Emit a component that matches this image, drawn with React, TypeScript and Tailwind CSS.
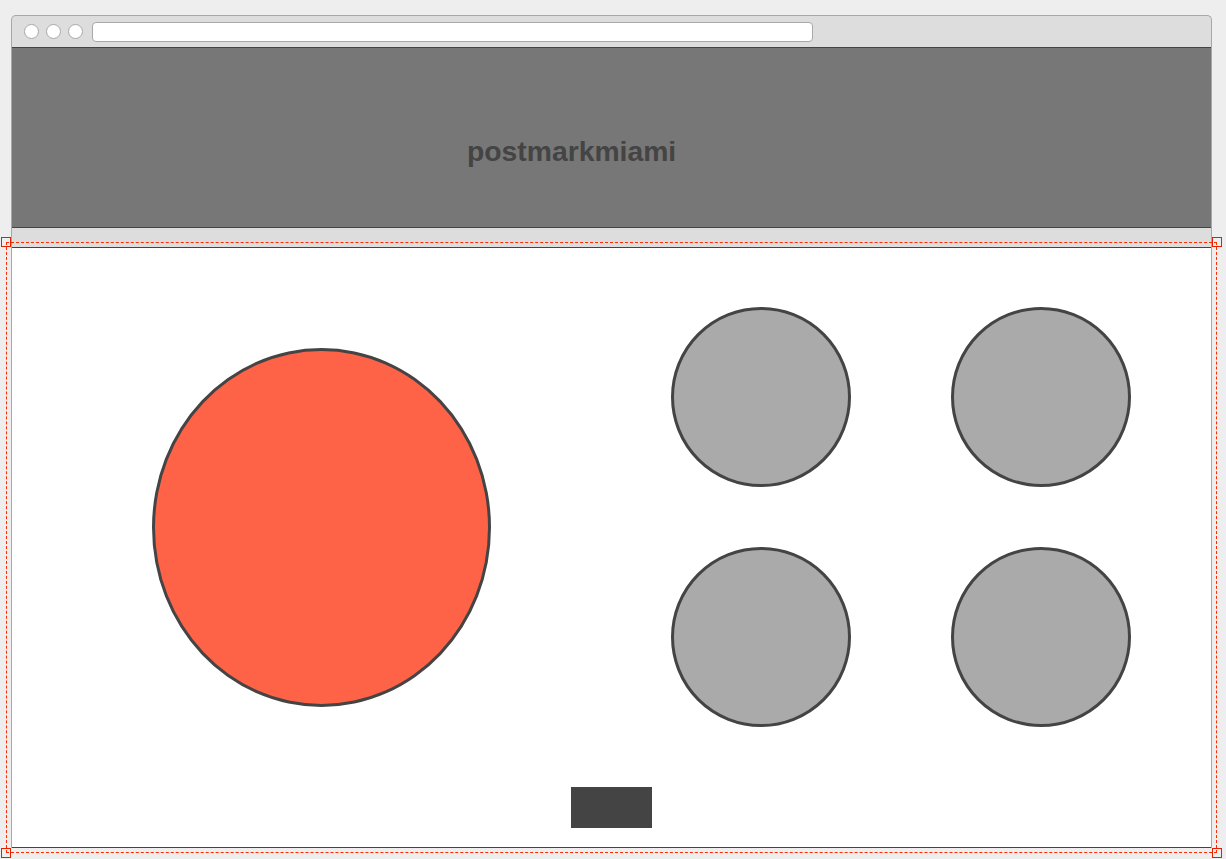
export default function App() {
  const dots = [0, 1, 2]
  const knobs = [0, 1, 2, 3]

  return (
    <div className="relative h-[859px] w-[1226px] overflow-hidden bg-[#eeeeee] font-['Liberation_Sans',Arial,sans-serif]">
      <div className="pt-[15px] pl-[11px]">
        <div className="w-[1201px] overflow-hidden rounded-t-[5px] border border-b-0 border-[#a8a8a8] bg-[#dddddd]">
          {/* title bar */}
          <div className="flex h-[31px] items-center pl-[12px]">
            <div className="flex gap-[7px]">
              {dots.map((d) => (
                <span
                  key={d}
                  className="h-[15px] w-[15px] rounded-full border border-[#a8a8a8] bg-white"
                />
              ))}
            </div>
            <div className="ml-[9px] h-[20px] w-[721px] rounded-[4px] border border-[#a8a8a8] bg-white" />
          </div>

          {/* header */}
          <div className="flex h-[181px] items-start border-y border-[#444444] bg-[#777777] pt-[87px] pl-[455px]">
            <div className="text-[28.3px] leading-[32px] font-bold text-[#444444]">postmarkmiami</div>
          </div>

          <div className="h-[19px] bg-[#dddddd]" />

          {/* canvas */}
          <div className="h-[601px] border-y border-[#444444] bg-white">
            <div className="flex items-start">
              <div className="mt-[100px] ml-[140px] h-[359px] w-[339px] rounded-[50%] border-[3px] border-[#444444] bg-[#ff6347]" />
              <div className="mt-[59px] ml-[180px] grid grid-cols-[180px_180px] gap-x-[100px] gap-y-[60px]">
                {knobs.map((k) => (
                  <div
                    key={k}
                    className="h-[180px] w-[180px] rounded-full border-[3px] border-[#444444] bg-[#aaaaaa]"
                  />
                ))}
              </div>
            </div>
            <div className="mt-[60px] ml-[559px] h-[41px] w-[81px] bg-[#444444]" />
          </div>
        </div>
      </div>

      {/* selection overlay */}
      <div className="pointer-events-none absolute top-[242px] left-[6px] h-[611px] w-[1211px] border border-dashed border-[#ff2a00]" />
      <div className="pointer-events-none absolute top-[237px] left-[1px] h-[10px] w-[10px] border border-[#e02000] bg-transparent" />
      <div className="pointer-events-none absolute top-[237px] left-[1212px] h-[10px] w-[10px] border border-[#e02000] bg-transparent" />
      <div className="pointer-events-none absolute top-[848px] left-[1px] h-[10px] w-[10px] border border-[#e02000] bg-transparent" />
      <div className="pointer-events-none absolute top-[848px] left-[1212px] h-[10px] w-[10px] border border-[#e02000] bg-transparent" />
    </div>
  )
}
